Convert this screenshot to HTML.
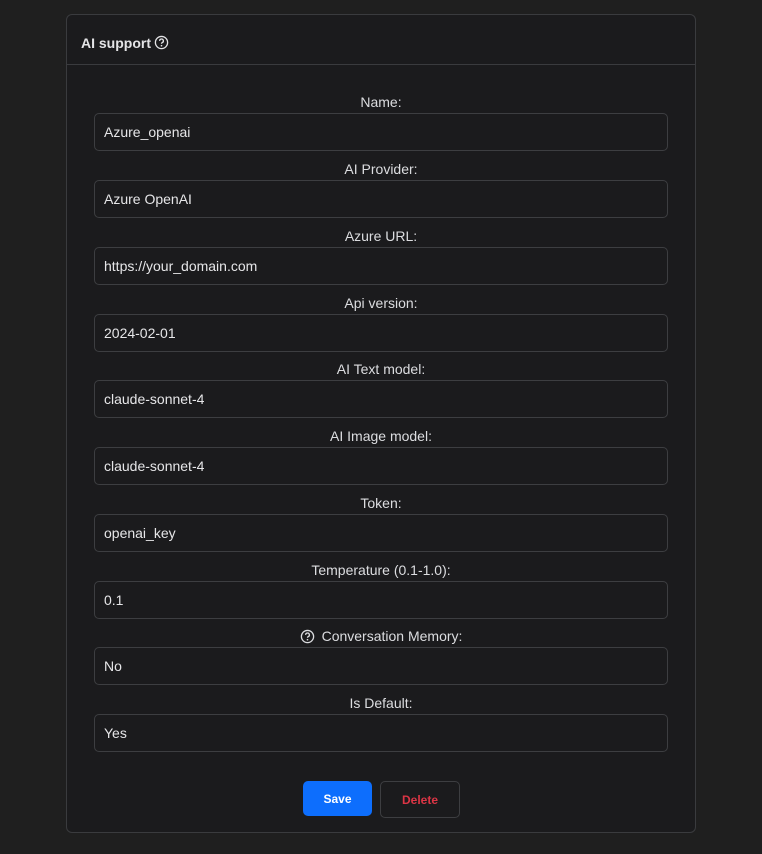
<!DOCTYPE html>
<html><head><style>
body{margin:0;background:#1f1f1f;font-family:"Liberation Sans",sans-serif;width:762px;height:854px;overflow:hidden}
.card{position:absolute;left:66px;top:14px;width:628px;height:817px;border:1px solid #3a3b3e;border-radius:6px;background:#1b1b1d}
.hd{height:43px;padding-top:6px;box-sizing:content-box;border-bottom:1px solid #3a3b3e;color:#e4e4e6;font-weight:bold;font-size:14px;display:flex;align-items:center;padding-left:14px;gap:3px}
.f{position:absolute;left:27px;width:574px}
.l{text-align:center;color:#dcdde0;font-size:14px;height:20px;line-height:20px;display:flex;justify-content:center;align-items:center;gap:7px}
.i{margin-top:1px;height:36px;border:1px solid #3d3e41;border-radius:5px;color:#e6e6e8;font-size:14px;line-height:36px;padding-left:9px}
.b{position:absolute;top:766px;height:35px;border-radius:5px;font-size:12px;font-weight:bold;display:flex;align-items:center;justify-content:center}
</style></head><body>
<div class="card">
<div class="hd">AI support <svg width="15" height="15" viewBox="0 0 16 16"><circle cx="8" cy="8" r="6.5" fill="none" stroke="#e4e4e6" stroke-width="1.4"/><path d="M6 6.3a2 2 0 1 1 2.6 1.9c-.5.2-.6.6-.6 1.1" fill="none" stroke="#e4e4e6" stroke-width="1.4"/><circle cx="8" cy="11.4" r=".9" fill="#e4e4e6"/></svg></div>
<div class="f" style="top:77px"><div class="l">Name:</div><div class="i">Azure_openai</div></div>
<div class="f" style="top:144px"><div class="l">AI Provider:</div><div class="i">Azure OpenAI</div></div>
<div class="f" style="top:211px"><div class="l">Azure URL:</div><div class="i">https://your_domain.com</div></div>
<div class="f" style="top:278px"><div class="l">Api version:</div><div class="i">2024-02-01</div></div>
<div class="f" style="top:344px"><div class="l">AI Text model:</div><div class="i">claude-sonnet-4</div></div>
<div class="f" style="top:411px"><div class="l">AI Image model:</div><div class="i">claude-sonnet-4</div></div>
<div class="f" style="top:478px"><div class="l">Token:</div><div class="i">openai_key</div></div>
<div class="f" style="top:545px"><div class="l">Temperature (0.1-1.0):</div><div class="i">0.1</div></div>
<div class="f" style="top:611px"><div class="l"><svg width="15" height="15" viewBox="0 0 16 16"><circle cx="8" cy="8" r="6.5" fill="none" stroke="#dcdde0" stroke-width="1.4"/><path d="M6 6.3a2 2 0 1 1 2.6 1.9c-.5.2-.6.6-.6 1.1" fill="none" stroke="#dcdde0" stroke-width="1.4"/><circle cx="8" cy="11.4" r=".9" fill="#dcdde0"/></svg>Conversation Memory:</div><div class="i">No</div></div>
<div class="f" style="top:678px"><div class="l">Is Default:</div><div class="i">Yes</div></div>
<div class="b" style="left:236px;width:69px;background:#0d6efd;color:#fff">Save</div>
<div class="b" style="left:313px;width:78px;border:1px solid #3d3e41;color:#dc3545;height:35px">Delete</div>
</div>
</body></html>
